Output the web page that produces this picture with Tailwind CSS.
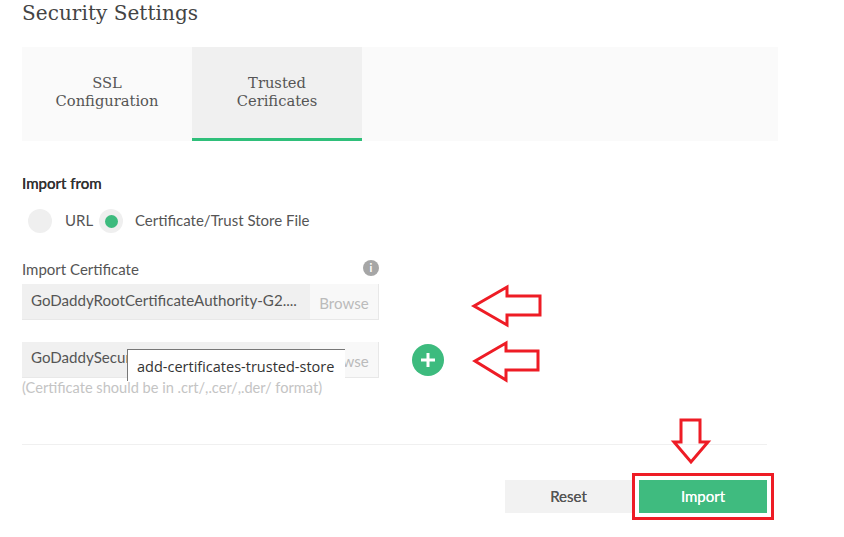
<!DOCTYPE html>
<html>
<head>
<meta charset="utf-8">
<script src="https://cdn.jsdelivr.net/npm/@tailwindcss/browser@4"></script>
</head>
<body class="bg-white">
<div class="relative w-[844px] h-[537px] overflow-hidden font-['Lato',sans-serif] text-[#555]">
  <div class="pl-[22px] w-[778px]">
    <h1 class="h-[47px] pt-[1px] font-['DejaVu_Serif',serif] text-[20px] leading-[24px] text-[#444] tracking-[0.05px] font-medium">Security Settings</h1>
    <div class="flex h-[94px] bg-[#fafafa] font-['DejaVu_Serif',serif] text-[14.7px] leading-[18px] text-[#555]">
      <div class="w-[170px] flex items-center justify-center text-center pb-[5px]">SSL<br>Configuration</div>
      <div class="w-[170px] flex items-center justify-center text-center pb-[2px] bg-[#f0f0f0] border-b-[3px] border-[#2fbf7a]">Trusted<br>Cerificates</div>
    </div>
    <div class="mt-[33px] text-[15px] leading-[18px] font-medium text-[#333] [text-shadow:0_0_0.6px_#333]">Import from</div>
    <div class="mt-[17px] ml-[6px] flex items-center h-[24px] text-[15px]">
      <span class="w-[24px] h-[24px] rounded-full bg-[#efefef]"></span>
      <span class="ml-[13px] w-[34px] pb-[1px]">URL</span>
      <span class="w-[24px] h-[24px] rounded-full bg-[#efefef] flex items-center justify-center"><span class="w-[13px] h-[13px] rounded-full bg-[#3dbb7e]"></span></span>
      <span class="ml-[12px] pb-[1px]">Certificate/Trust Store File</span>
    </div>
    <div class="mt-[27px] w-[357px] flex items-center justify-between h-[18px] text-[15px]">
      <span>Import Certificate</span>
      <span class="w-[16px] h-[16px] mb-[2px] rounded-full bg-[#a6a6a6] text-white text-[11px] leading-[16px] text-center font-bold">i</span>
    </div>
    <div class="mt-[6px] w-[357px] h-[36px] flex bg-[#f0f0f0] border-b border-r border-[#e8e8e8] text-[15.1px]">
      <div class="w-[288px] pl-[9px] leading-[32px] text-[#555] whitespace-nowrap">GoDaddyRootCertificateAuthority-G2....</div>
      <div class="flex-1 bg-[#f8f8f8] text-center leading-[38px] text-[#bbb]">Browse</div>
    </div>
    <div class="mt-[22px] w-[357px] h-[36px] flex bg-[#f0f0f0] border-b border-r border-[#e8e8e8] text-[15.1px]">
      <div class="w-[288px] pl-[9px] leading-[30px] text-[#555] whitespace-nowrap overflow-hidden">GoDaddySecure</div>
      <div class="flex-1 bg-[#f8f8f8] text-center leading-[38px] text-[#bbb]">Browse</div>
    </div>
    <div class="mt-[1px] text-[14.6px] leading-[18px] text-[#c4c4c4]">(Certificate should be in .crt/,.cer/,.der/ format)</div>
    <div class="mt-[47px] h-px w-[745px] bg-[#f0f0f0]"></div>
    <div class="mt-[35px] w-[745px] flex justify-end text-[15px] leading-[32px]">
      <div class="w-[129px] h-[33px] bg-[#f2f2f2] text-center text-[#555] pr-[2px] [text-shadow:0_0_0.4px_#555] mr-[5px]">Reset</div>
      <div class="w-[128px] h-[33px] bg-[#3fbb7f] text-center text-white [text-shadow:0_0_0.4px_#fff]">Import</div>
    </div>
  </div>

  <!-- green add button -->
  <div class="absolute left-[412px] top-[344px] w-[32px] h-[32px] rounded-full bg-[#3dbb7e] flex items-center justify-center">
    <svg width="18" height="18" viewBox="0 0 18 18"><path d="M9 2v14M2 9h14" stroke="#fff" stroke-width="3" fill="none"/></svg>
  </div>

  <!-- tooltip -->
  <div class="absolute left-[127px] top-[349px] w-[218px] h-[32px] bg-white border-l border-t border-[#777] font-['Open_Sans',sans-serif] text-[14.5px] leading-[34px] pl-[9px] text-[#333] whitespace-nowrap">add-certificates-trusted-store</div>

  <!-- red annotations -->
  <svg class="absolute left-0 top-0" width="844" height="537" viewBox="0 0 844 537" fill="none" stroke="#ee1c25" stroke-width="3">
    <path d="M474 306 L507 287 V296 H540 V315 H507 V325 Z"/>
    <path d="M475 361 L506 343 V351 H538 V370 H506 V380 Z"/>
    <path d="M681 420 H700 V442 H708 L691 462 L674 442 H681 Z"/>
  </svg>
  <div class="absolute left-[632px] top-[473px] w-[142px] h-[47px] border-[3px] border-[#ee1c25]"></div>
</div>
</body>
</html>
